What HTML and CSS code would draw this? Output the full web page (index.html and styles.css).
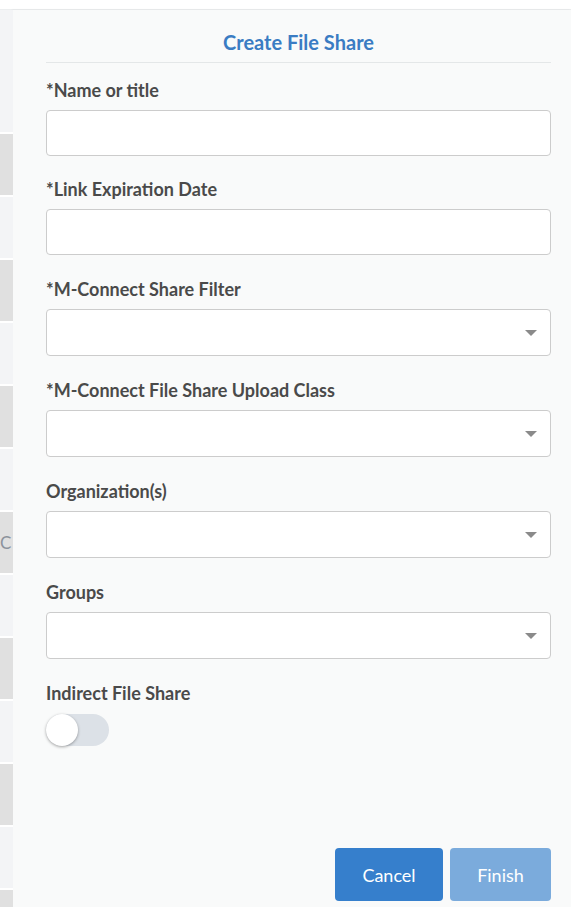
FILE: index.html
```html
<!DOCTYPE html>
<html lang="en">
<head>
<meta charset="utf-8">
<title>Create File Share</title>
<link rel="stylesheet" href="styles.css">
</head>
<body>
<div class="topbar"></div>
<div class="main">
  <div class="strip">
    <div class="srow srow-first"></div>
    <div class="srow gray"></div>
    <div class="srow"></div>
    <div class="srow gray"></div>
    <div class="srow"></div>
    <div class="srow gray"></div>
    <div class="srow"></div>
    <div class="srow gray"><span class="strip-letter">C</span></div>
    <div class="srow"></div>
    <div class="srow gray"></div>
    <div class="srow"></div>
    <div class="srow gray"></div>
    <div class="srow"></div>
    <div class="srow gray"></div>
  </div>
  <div class="panel">
    <h2 class="title">Create File Share</h2>
    <div class="field">
      <label class="label">*Name or title</label>
      <div class="input"></div>
    </div>
    <div class="field field-tight">
      <label class="label">*Link Expiration Date</label>
      <div class="input"></div>
    </div>
    <div class="field">
      <label class="label">*M-Connect Share Filter</label>
      <div class="input select"><span class="caret"></span></div>
    </div>
    <div class="field">
      <label class="label">*M-Connect File Share Upload Class</label>
      <div class="input select"><span class="caret"></span></div>
    </div>
    <div class="field">
      <label class="label">Organization(s)</label>
      <div class="input select"><span class="caret"></span></div>
    </div>
    <div class="field">
      <label class="label">Groups</label>
      <div class="input select"><span class="caret"></span></div>
    </div>
    <div class="field">
      <label class="label">Indirect File Share</label>
      <div class="toggle"><span class="knob"></span></div>
    </div>
    <div class="footer">
      <button class="btn btn-cancel">Cancel</button>
      <button class="btn btn-finish">Finish</button>
    </div>
  </div>
</div>
</body>
</html>
```
FILE: styles.css
```css
* { box-sizing: border-box; }
html, body { margin: 0; padding: 0; }
body {
  width: 571px;
  height: 907px;
  overflow: hidden;
  background: #ffffff;
  font-family: Lato, "Open Sans", sans-serif;
}
.topbar {
  height: 10px;
  background: #ffffff;
  border-bottom: 1px solid #eceeef;
}
.main {
  display: flex;
  height: 897px;
}
.strip {
  width: 13px;
  flex: none;
  background: #ffffff;
  overflow: hidden;
  display: flex;
  flex-direction: column;
}
.srow {
  height: 63px;
  flex: none;
  background: #f3f4f6;
  border-bottom: 2px solid #ffffff;
  position: relative;
  overflow: hidden;
}
.srow-first { height: 126px; margin-top: -2px; }
.srow.gray { background: #e0e0e0; }
.strip-letter {
  position: absolute;
  left: 0;
  top: 21px;
  font-size: 17px;
  line-height: 20px;
  color: #8c939c;
  font-family: Lato, sans-serif;
}
.panel {
  flex: 1;
  background: #f9fafa;
  box-shadow: -1px 0 2px rgba(0,0,0,0.08);
  padding: 0 20px 6px 33px;
  display: flex;
  flex-direction: column;
}
.title {
  margin: 20px 0 0 0;
  padding-bottom: 8px;
  border-bottom: 1px solid #e4e7e8;
  text-align: center;
  font-size: 20px;
  line-height: 24px;
  font-weight: 700;
  color: #3a7cc3;
}
.field {
  display: flex;
  flex-direction: column;
  margin-top: 17px;
}
.field + .field { margin-top: 24px; }
.field + .field-tight { margin-top: 23px; }
.label {
  font-size: 18px;
  line-height: 20px;
  font-weight: 700;
  color: #4a4a4a;
  margin-bottom: 10px;
}
.input {
  height: 46px;
  background: #ffffff;
  border: 1px solid #cccccc;
  border-radius: 4px;
  position: relative;
}
.select { height: 47px; }
.caret {
  position: absolute;
  right: 13px;
  top: 20px;
  width: 0;
  height: 0;
  border-left: 6.5px solid transparent;
  border-right: 6.5px solid transparent;
  border-top: 6.5px solid #8a8a8a;
}
.toggle {
  width: 63px;
  height: 32px;
  border-radius: 16px;
  background: #dce1e7;
  position: relative;
  margin-top: 1px;
}
.knob {
  position: absolute;
  left: 0;
  top: 0;
  width: 32px;
  height: 32px;
  border-radius: 50%;
  background: #ffffff;
  box-shadow: 0 1px 3px rgba(0,0,0,0.35);
}
.footer {
  margin-top: auto;
  display: flex;
  justify-content: flex-end;
  gap: 7px;
}
.btn {
  height: 53px;
  border: none;
  border-radius: 4px;
  color: #ffffff;
  font-family: Lato, sans-serif;
  font-size: 18px;
  padding: 0;
}
.btn-cancel { width: 108px; background: #367fcc; }
.btn-finish { width: 101px; background: #7babdc; }
```
